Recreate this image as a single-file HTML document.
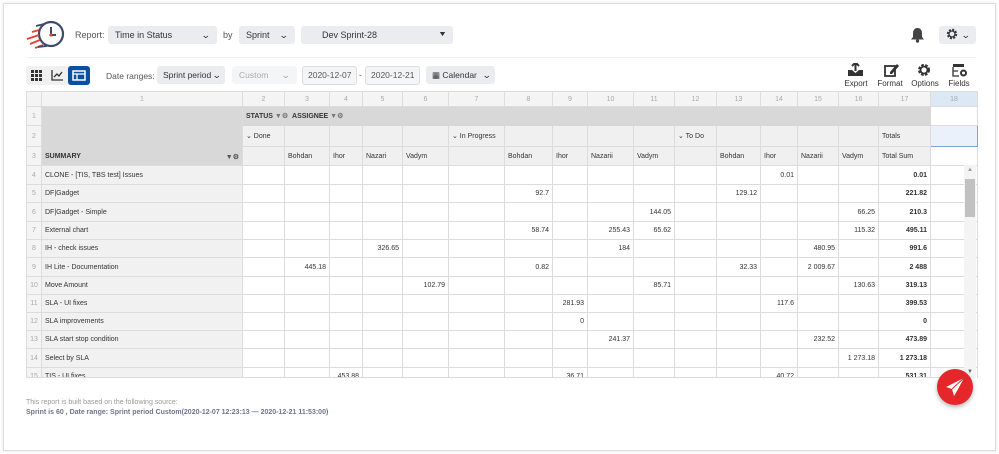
<!DOCTYPE html>
<html><head><meta charset="utf-8">
<style>
*{box-sizing:border-box;margin:0;padding:0}
body{width:999px;height:454px;background:#fff;font-family:"Liberation Sans",sans-serif;position:relative;overflow:hidden;color:#333}
.card{position:absolute;left:3px;top:3px;width:993px;height:448px;border:1px solid #ddd;box-shadow:0 0 3px rgba(0,0,0,.12)}
.abs{position:absolute}
.sel{position:absolute;background:#ebecf0;border-radius:3px;font-size:9px;color:#333;line-height:18px;padding-left:7px;white-space:nowrap}
.sel .car{position:absolute;right:7px;top:0;font-size:9px;transform:scaleX(1.3)}
.lbl{position:absolute;font-size:9px;color:#555;line-height:18px;white-space:nowrap}
table{position:absolute;left:26px;top:91px;border-collapse:collapse;table-layout:fixed;font-size:7px;color:#333}
td{border:1px solid #dcdcdc;padding:0 3px;white-space:nowrap;overflow:hidden;height:18px}
td.n{background:#f4f4f4;color:#aaa;text-align:center;padding:0}
td.r{text-align:right}
td.b{font-weight:bold;text-align:right}
td.g{background:#d8d8d8}
td.lg{background:#f1f1f1}
td.s{background:#f0f0f0}
tr.hd td{background:#f4f4f4;color:#aaa;text-align:center;height:15px}
.ic{position:absolute;font-size:8px;color:#333;text-align:center}
</style></head><body>
<div class="card"></div>
<svg class="abs" style="left:24px;top:17px" width="42" height="34" viewBox="0 0 42 34">
<circle cx="27" cy="17" r="12" fill="#fff" stroke="#3d4a6b" stroke-width="2.2"/>
<path d="M27 10v8h5" fill="none" stroke="#3d4a6b" stroke-width="2"/>
<circle cx="27" cy="18" r="1.6" fill="#e0452b"/>
<path d="M3 22l12-4M6 27l10-4M11 31l8-3M8 15l7-2" stroke="#e0452b" stroke-width="1.8"/>
<path d="M12 9l8-2M14 30l9-1" stroke="#3d4a6b" stroke-width="1.8"/>
</svg>
<div class="lbl" style="left:75px;top:26px">Report:</div>
<div class="sel" style="left:108px;top:26px;width:109px">Time in Status<span class="car">&#8964;</span></div>
<div class="lbl" style="left:223px;top:26px">by</div>
<div class="sel" style="left:239px;top:26px;width:56px">Sprint<span class="car">&#8964;</span></div>
<div class="sel" style="left:301px;top:26px;width:152px;padding-left:21px">Dev Sprint-28<span class="car" style="font-size:7px">&#9660;</span></div>
<svg class="abs" style="left:910px;top:27px" width="15" height="16" viewBox="0 0 15 16"><path d="M7.5 1c-3 0-4.5 2.5-4.5 5v4l-2 2.5h13l-2-2.5v-4c0-2.5-1.5-5-4.5-5z" fill="#444"/><circle cx="7.5" cy="14" r="1.7" fill="#444"/></svg>
<div class="sel" style="left:939px;top:26px;width:37px;padding-left:7px"><svg width="12" height="12" viewBox="0 0 12 12" style="vertical-align:-2px"><circle cx="6" cy="6" r="4.2" fill="none" stroke="#333" stroke-width="2" stroke-dasharray="2 1.3"/><circle cx="6" cy="6" r="3" fill="none" stroke="#333" stroke-width="1.3"/></svg><span class="car" style="right:6px">&#8964;</span></div>
<div class="abs" style="left:26px;top:57px;width:950px;height:1px;background:#eee"></div>
<div class="abs" style="left:26px;top:66px;width:64px;height:19px;background:#f0f0f0;border-radius:3px"></div>
<svg class="abs" style="left:31px;top:70px" width="11" height="11"><g fill="#333"><rect x="0" y="0" width="3" height="3"/><rect x="4" y="0" width="3" height="3"/><rect x="8" y="0" width="3" height="3"/><rect x="0" y="4" width="3" height="3"/><rect x="4" y="4" width="3" height="3"/><rect x="8" y="4" width="3" height="3"/><rect x="0" y="8" width="3" height="3"/><rect x="4" y="8" width="3" height="3"/><rect x="8" y="8" width="3" height="3"/></g></svg>
<svg class="abs" style="left:51px;top:69px" width="13" height="12"><path d="M1 1v10h11" fill="none" stroke="#333" stroke-width="1.3"/><path d="M3 8l3-3 2 2 3-4" fill="none" stroke="#333" stroke-width="1.3"/></svg>
<div class="abs" style="left:68px;top:66px;width:22px;height:19px;background:#0b4fa0;border-radius:3px"></div>
<svg class="abs" style="left:72px;top:70px" width="14" height="11"><rect x="1" y="1" width="12" height="9" fill="none" stroke="#fff" stroke-width="1.5"/><path d="M1 4h12M5 4v6" stroke="#fff" stroke-width="1.3"/></svg>
<div class="lbl" style="left:106px;top:67px;font-size:8.5px">Date ranges:</div>
<div class="sel" style="left:157px;top:66px;width:68px;padding-left:6px;font-size:8.5px">Sprint period<span class="car" style="right:4px">&#8964;</span></div>
<div class="sel" style="left:232px;top:66px;width:65px;background:#f4f5f7;color:#aaa;font-size:8.5px">Custom<span class="car">&#8964;</span></div>
<div class="sel" style="left:302px;top:66px;width:55px;background:#f4f5f7;border:1px solid #ddd;line-height:17px;color:#555;font-size:8.5px;padding-left:5px">2020-12-07</div>
<div class="lbl" style="left:359px;top:66px">-</div>
<div class="sel" style="left:365px;top:66px;width:55px;background:#f4f5f7;border:1px solid #ddd;line-height:17px;color:#555;font-size:8.5px;padding-left:5px">2020-12-21</div>
<div class="sel" style="left:426px;top:66px;width:69px;padding-left:6px;font-size:8.5px">&#9638; Calendar<span class="car" style="right:4px">&#8964;</span></div>
<svg class="abs" style="left:847px;top:63px" width="17" height="14"><path d="M8.5 0v8M5 3l3.5-3.5L12 3" fill="none" stroke="#333" stroke-width="2"/><path d="M1 7v6h15V7h-4l-3.5 3L5 7z" fill="#333"/></svg>
<svg class="abs" style="left:884px;top:63px" width="15" height="14"><rect x="1" y="3" width="10" height="10" fill="none" stroke="#333" stroke-width="1.8"/><path d="M6 9l7-8 2 2-7 8H6z" fill="#333"/></svg>
<svg class="abs" style="left:917px;top:63px" width="14" height="14"><circle cx="7" cy="7" r="4.5" fill="none" stroke="#333" stroke-width="3" stroke-dasharray="2.4 1.3"/><circle cx="7" cy="7" r="3.5" fill="none" stroke="#333" stroke-width="1.8"/></svg>
<svg class="abs" style="left:952px;top:63px" width="16" height="14"><rect x="1" y="1" width="11" height="3" fill="#333"/><path d="M1 4v9h6M1 8h5" fill="none" stroke="#333" stroke-width="1.3"/><circle cx="11.5" cy="10" r="2.5" fill="none" stroke="#333" stroke-width="2"/></svg>
<div class="ic" style="left:840px;top:79px;width:32px">Export</div>
<div class="ic" style="left:874px;top:79px;width:32px">Format</div>
<div class="ic" style="left:907px;top:79px;width:36px">Options</div>
<div class="ic" style="left:944px;top:79px;width:30px">Fields</div>
<table>
<colgroup><col style="width:15px"><col style="width:201px"><col style="width:42px"><col style="width:45px"><col style="width:33px"><col style="width:40px"><col style="width:46px"><col style="width:56px"><col style="width:48px"><col style="width:35px"><col style="width:46px"><col style="width:41px"><col style="width:42px"><col style="width:44px"><col style="width:37px"><col style="width:41px"><col style="width:40px"><col style="width:52px"><col style="width:47px"></colgroup>
<tr class="hd"><td></td><td>1</td><td>2</td><td>3</td><td>4</td><td>5</td><td>6</td><td>7</td><td>8</td><td>9</td><td>10</td><td>11</td><td>12</td><td>13</td><td>14</td><td>15</td><td>16</td><td>17</td><td style="background:#dde8f5">18</td></tr>
<tr style="height:19px"><td class="n">1</td><td class="g" rowspan="3" style="vertical-align:bottom;padding-bottom:4px;font-weight:bold;font-size:7px">SUMMARY<span style="float:right;color:#555">&#9660;&#9881;</span></td><td class="g" colspan="16" style="font-weight:bold;border-color:#d8d8d8">STATUS <span style="color:#777">&#9660;&#9881;</span> &nbsp;ASSIGNEE <span style="color:#777">&#9660;&#9881;</span></td><td></td></tr>
<tr style="height:21px"><td class="n">2</td><td class="s">&#8964; Done</td><td class="s"></td><td class="s"></td><td class="s"></td><td class="s"></td><td class="s">&#8964; In Progress</td><td class="s"></td><td class="s"></td><td class="s"></td><td class="s"></td><td class="s">&#8964; To Do</td><td class="s"></td><td class="s"></td><td class="s"></td><td class="s"></td><td class="s">Totals</td><td style="border:1px solid #7ea3d0;background:#eaf1fa"></td></tr>
<tr style="height:19px"><td class="n">3</td><td class="s"></td><td class="s">Bohdan</td><td class="s">Ihor</td><td class="s">Nazari</td><td class="s">Vadym</td><td class="s"></td><td class="s">Bohdan</td><td class="s">Ihor</td><td class="s">Nazarii</td><td class="s">Vadym</td><td class="s"></td><td class="s">Bohdan</td><td class="s">Ihor</td><td class="s">Nazarii</td><td class="s">Vadym</td><td class="s">Total Sum</td><td></td></tr>
<tr style="height:19px"><td class="n">4</td><td class="lg">CLONE - [TIS, TBS test] Issues</td><td></td><td></td><td></td><td></td><td></td><td></td><td></td><td></td><td></td><td></td><td></td><td></td><td class="r">0.01</td><td></td><td></td><td class="b">0.01</td><td></td></tr>
<tr><td class="n">5</td><td class="lg">DF|Gadget</td><td></td><td></td><td></td><td></td><td></td><td></td><td class="r">92.7</td><td></td><td></td><td></td><td></td><td class="r">129.12</td><td></td><td></td><td></td><td class="b">221.82</td><td></td></tr>
<tr style="height:19px"><td class="n">6</td><td class="lg">DF|Gadget - Simple</td><td></td><td></td><td></td><td></td><td></td><td></td><td></td><td></td><td></td><td class="r">144.05</td><td></td><td></td><td></td><td></td><td class="r">66.25</td><td class="b">210.3</td><td></td></tr>
<tr><td class="n">7</td><td class="lg">External chart</td><td></td><td></td><td></td><td></td><td></td><td></td><td class="r">58.74</td><td></td><td class="r">255.43</td><td class="r">65.62</td><td></td><td></td><td></td><td></td><td class="r">115.32</td><td class="b">495.11</td><td></td></tr>
<tr><td class="n">8</td><td class="lg">IH - check issues</td><td></td><td></td><td></td><td class="r">326.65</td><td></td><td></td><td></td><td></td><td class="r">184</td><td></td><td></td><td></td><td></td><td class="r">480.95</td><td></td><td class="b">991.6</td><td></td></tr>
<tr style="height:19px"><td class="n">9</td><td class="lg">IH Lite - Documentation</td><td></td><td class="r">445.18</td><td></td><td></td><td></td><td></td><td class="r">0.82</td><td></td><td></td><td></td><td></td><td class="r">32.33</td><td></td><td class="r">2 009.67</td><td></td><td class="b">2 488</td><td></td></tr>
<tr><td class="n">10</td><td class="lg">Move Amount</td><td></td><td></td><td></td><td></td><td class="r">102.79</td><td></td><td></td><td></td><td></td><td class="r">85.71</td><td></td><td></td><td></td><td></td><td class="r">130.63</td><td class="b">319.13</td><td></td></tr>
<tr><td class="n">11</td><td class="lg">SLA - UI fixes</td><td></td><td></td><td></td><td></td><td></td><td></td><td></td><td class="r">281.93</td><td></td><td></td><td></td><td></td><td class="r">117.6</td><td></td><td></td><td class="b">399.53</td><td></td></tr>
<tr><td class="n">12</td><td class="lg">SLA improvements</td><td></td><td></td><td></td><td></td><td></td><td></td><td></td><td class="r">0</td><td></td><td></td><td></td><td></td><td></td><td></td><td></td><td class="b">0</td><td></td></tr>
<tr><td class="n">13</td><td class="lg">SLA start stop condition</td><td></td><td></td><td></td><td></td><td></td><td></td><td></td><td></td><td class="r">241.37</td><td></td><td></td><td></td><td></td><td class="r">232.52</td><td></td><td class="b">473.89</td><td></td></tr>
<tr style="height:19px"><td class="n">14</td><td class="lg">Select by SLA</td><td></td><td></td><td></td><td></td><td></td><td></td><td></td><td></td><td></td><td></td><td></td><td></td><td></td><td></td><td class="r">1 273.18</td><td class="b">1 273.18</td><td></td></tr>
<tr><td class="n">15</td><td class="lg">TIS - UI fixes</td><td></td><td></td><td class="r">453.88</td><td></td><td></td><td></td><td></td><td class="r">36.71</td><td></td><td></td><td></td><td></td><td class="r">40.72</td><td></td><td></td><td class="b">531.31</td><td></td></tr>
</table>
<div class="abs" style="left:5px;top:378px;width:989px;height:72px;background:#fff"></div>
<div class="abs" style="left:26px;top:377px;width:939px;height:1px;background:#dcdcdc"></div>
<div class="abs" style="left:964px;top:165px;width:12px;height:213px;background:#f4f4f4"></div>
<div class="abs" style="left:965px;top:179px;width:10px;height:38px;background:#c1c1c1"></div>
<div class="abs" style="left:967px;top:167px;font-size:6px;color:#999">&#9650;</div>
<div class="abs" style="left:967px;top:369px;font-size:6px;color:#666">&#9660;</div>
<div class="abs" style="left:26px;top:399px;font-size:7px;color:#999">This report is built based on the following source:</div>
<div class="abs" style="left:26px;top:409px;font-size:7px;color:#6b778c;font-weight:bold">Sprint is 60 , Date range: Sprint period Custom(2020-12-07 12:23:13 — 2020-12-21 11:53:00)</div>
<div class="abs" style="left:937px;top:369px;width:36px;height:36px;border-radius:50%;background:#e5262a;box-shadow:0 2px 5px rgba(0,0,0,.3)"></div>
<svg class="abs" style="left:944px;top:377px" width="22" height="20"><path d="M20 1L2 10l6 2 2 7 3-5z" fill="#fff"/><path d="M8 12l12-11" stroke="#e5262a" stroke-width="1"/></svg>
</body></html>
